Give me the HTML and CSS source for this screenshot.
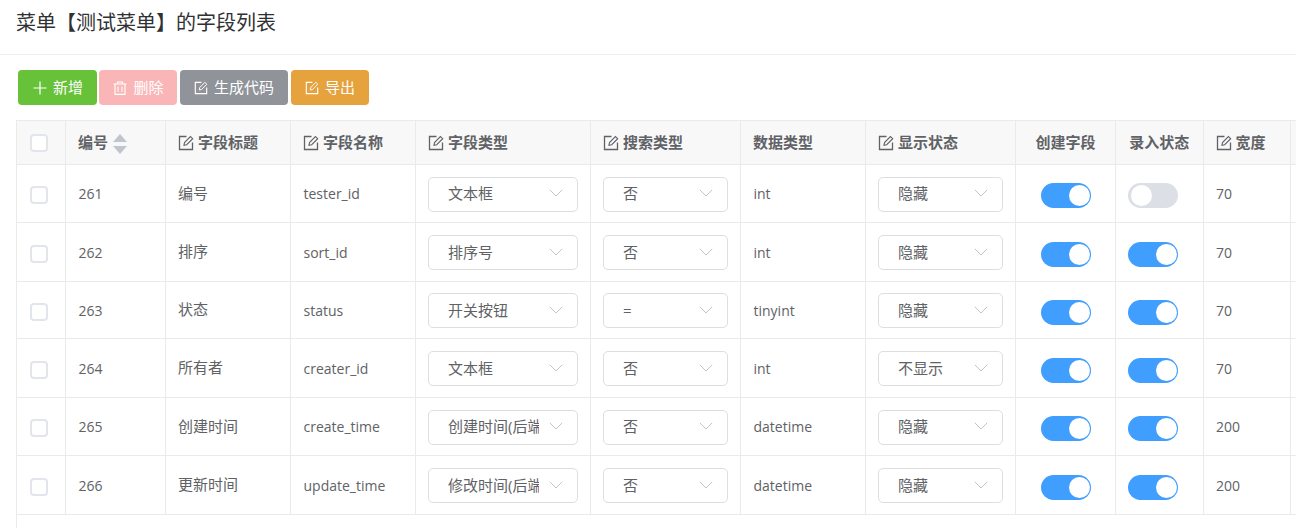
FILE: index.html
```html
<!DOCTYPE html>
<html lang="zh-CN">
<head>
<meta charset="utf-8">
<title>字段列表</title>
<link rel="stylesheet" href="styles.css">
</head>
<body>
<svg class="defs" aria-hidden="true">
  <symbol id="i-edit" viewBox="0 0 16 16">
    <path d="M8.5 1.5H1.5v13h13V7.5" fill="none" stroke="currentColor" stroke-width="1.3"/>
    <path d="M6 10.2l.5-2.7 5.9-6 2.3 2.2-6 6z" fill="none" stroke="currentColor" stroke-width="1.1"/>
  </symbol>
  <symbol id="i-plus" viewBox="0 0 14 14">
    <path d="M7 .5v13M.5 7h13" fill="none" stroke="currentColor" stroke-width="1.2"/>
  </symbol>
  <symbol id="i-trash" viewBox="0 0 14 14">
    <path d="M.5 3h13M4.5 3V1h5v2M2 3v10.4h10V3M5 5.5v5.5M9 5.5v5.5" fill="none" stroke="currentColor" stroke-width="1.1"/>
  </symbol>
  <symbol id="i-down" viewBox="0 0 14 8">
    <path d="M.8.8L7 7l6.2-6.2" fill="none" stroke="currentColor" stroke-width="1"/>
  </symbol>
  <symbol id="i-sort" viewBox="0 0 14 20">
    <path d="M7 0l7 8H0zM0 12h14l-7 8z" fill="currentColor"/>
  </symbol>
</svg>

<header class="page-head"><h1 class="page-title">菜单【测试菜单】的字段列表</h1></header>

<div class="toolbar">
  <button class="btn btn-add"><svg class="btn-icon"><use href="#i-plus"/></svg>新增</button>
  <button class="btn btn-del"><svg class="btn-icon"><use href="#i-trash"/></svg>删除</button>
  <button class="btn btn-gen"><svg class="btn-icon"><use href="#i-edit"/></svg>生成代码</button>
  <button class="btn btn-exp"><svg class="btn-icon"><use href="#i-edit"/></svg>导出</button>
</div>

<div class="table-wrap">
<table class="grid">
  <colgroup>
    <col class="c-check"><col class="c-id"><col class="c-m"><col class="c-m"><col class="c-l"><col class="c-s"><col class="c-m"><col class="c-s"><col class="c-id"><col class="c-w"><col class="c-w"><col class="c-w">
  </colgroup>
  <thead>
    <tr>
      <th class="th-check"><span class="check"></span></th>
      <th><span class="th-in">编号<svg class="sort"><use href="#i-sort"/></svg></span></th>
      <th><span class="th-in"><svg class="th-icon"><use href="#i-edit"/></svg>字段标题</span></th>
      <th><span class="th-in"><svg class="th-icon"><use href="#i-edit"/></svg>字段名称</span></th>
      <th><span class="th-in"><svg class="th-icon"><use href="#i-edit"/></svg>字段类型</span></th>
      <th><span class="th-in"><svg class="th-icon"><use href="#i-edit"/></svg>搜索类型</span></th>
      <th><span class="th-in">数据类型</span></th>
      <th><span class="th-in"><svg class="th-icon"><use href="#i-edit"/></svg>显示状态</span></th>
      <th class="center">创建字段</th>
      <th class="center">录入状态</th>
      <th><span class="th-in"><svg class="th-icon"><use href="#i-edit"/></svg>宽度</span></th>
      <th></th>
    </tr>
  </thead>
  <tbody>
    <tr class="r58">
      <td><span class="check check-body"></span></td><td class="en">261</td><td class="zh">编号</td><td class="en">tester_id</td>
      <td><div class="sel sel-l"><span class="sel-text">文本框</span><svg class="sel-arrow"><use href="#i-down"/></svg></div></td>
      <td><div class="sel sel-m"><span class="sel-text">否</span><svg class="sel-arrow"><use href="#i-down"/></svg></div></td>
      <td class="en">int</td>
      <td><div class="sel sel-m"><span class="sel-text">隐藏</span><svg class="sel-arrow"><use href="#i-down"/></svg></div></td>
      <td class="center"><span class="switch on"><i class="knob"></i></span></td>
      <td><span class="switch"><i class="knob"></i></span></td>
      <td class="en">70</td><td></td>
    </tr>
    <tr class="r59">
      <td><span class="check check-body"></span></td><td class="en">262</td><td class="zh">排序</td><td class="en">sort_id</td>
      <td><div class="sel sel-l"><span class="sel-text">排序号</span><svg class="sel-arrow"><use href="#i-down"/></svg></div></td>
      <td><div class="sel sel-m"><span class="sel-text">否</span><svg class="sel-arrow"><use href="#i-down"/></svg></div></td>
      <td class="en">int</td>
      <td><div class="sel sel-m"><span class="sel-text">隐藏</span><svg class="sel-arrow"><use href="#i-down"/></svg></div></td>
      <td class="center"><span class="switch on"><i class="knob"></i></span></td>
      <td><span class="switch on"><i class="knob"></i></span></td>
      <td class="en">70</td><td></td>
    </tr>
    <tr class="r57">
      <td><span class="check check-body"></span></td><td class="en">263</td><td class="zh">状态</td><td class="en">status</td>
      <td><div class="sel sel-l"><span class="sel-text">开关按钮</span><svg class="sel-arrow"><use href="#i-down"/></svg></div></td>
      <td><div class="sel sel-m"><span class="sel-text">=</span><svg class="sel-arrow"><use href="#i-down"/></svg></div></td>
      <td class="en">tinyint</td>
      <td><div class="sel sel-m"><span class="sel-text">隐藏</span><svg class="sel-arrow"><use href="#i-down"/></svg></div></td>
      <td class="center"><span class="switch on"><i class="knob"></i></span></td>
      <td><span class="switch on"><i class="knob"></i></span></td>
      <td class="en">70</td><td></td>
    </tr>
    <tr class="r59">
      <td><span class="check check-body"></span></td><td class="en">264</td><td class="zh">所有者</td><td class="en">creater_id</td>
      <td><div class="sel sel-l"><span class="sel-text">文本框</span><svg class="sel-arrow"><use href="#i-down"/></svg></div></td>
      <td><div class="sel sel-m"><span class="sel-text">否</span><svg class="sel-arrow"><use href="#i-down"/></svg></div></td>
      <td class="en">int</td>
      <td><div class="sel sel-m"><span class="sel-text">不显示</span><svg class="sel-arrow"><use href="#i-down"/></svg></div></td>
      <td class="center"><span class="switch on"><i class="knob"></i></span></td>
      <td><span class="switch on"><i class="knob"></i></span></td>
      <td class="en">70</td><td></td>
    </tr>
    <tr class="r58">
      <td><span class="check check-body"></span></td><td class="en">265</td><td class="zh">创建时间</td><td class="en">create_time</td>
      <td><div class="sel sel-l"><span class="sel-text">创建时间(后端自动)</span><svg class="sel-arrow"><use href="#i-down"/></svg></div></td>
      <td><div class="sel sel-m"><span class="sel-text">否</span><svg class="sel-arrow"><use href="#i-down"/></svg></div></td>
      <td class="en">datetime</td>
      <td><div class="sel sel-m"><span class="sel-text">隐藏</span><svg class="sel-arrow"><use href="#i-down"/></svg></div></td>
      <td class="center"><span class="switch on"><i class="knob"></i></span></td>
      <td><span class="switch on"><i class="knob"></i></span></td>
      <td class="en">200</td><td></td>
    </tr>
    <tr class="r59">
      <td><span class="check check-body"></span></td><td class="en">266</td><td class="zh">更新时间</td><td class="en">update_time</td>
      <td><div class="sel sel-l"><span class="sel-text">修改时间(后端自动)</span><svg class="sel-arrow"><use href="#i-down"/></svg></div></td>
      <td><div class="sel sel-m"><span class="sel-text">否</span><svg class="sel-arrow"><use href="#i-down"/></svg></div></td>
      <td class="en">datetime</td>
      <td><div class="sel sel-m"><span class="sel-text">隐藏</span><svg class="sel-arrow"><use href="#i-down"/></svg></div></td>
      <td class="center"><span class="switch on"><i class="knob"></i></span></td>
      <td><span class="switch on"><i class="knob"></i></span></td>
      <td class="en">200</td><td></td>
    </tr>
  </tbody>
</table>
</div>
</body>
</html>
```
FILE: styles.css
```css
* { box-sizing: border-box; }
html, body { margin: 0; height: 100%; overflow: hidden; }
body {
  display: flex;
  flex-direction: column;
  background: #fff;
  color: #606266;
  font: 15px/20px "Open Sans", "Noto Sans CJK SC", sans-serif;
}
.defs { display: none; }

.page-head { height: 55px; padding: 8px 16px 0; border-bottom: 1px solid #ebedf0; }
.page-title { margin: 0; font-size: 20px; line-height: 30px; font-weight: 400; color: #303133; }

.toolbar { display: flex; gap: 3px; padding: 15px 18px; height: 65px; }
.btn {
  display: flex; align-items: center; justify-content: center; gap: 6px;
  height: 35px; padding: 0 0 2px; border: 0; border-radius: 4px;
  color: #fff; font: inherit;
}
.btn-icon { width: 14px; height: 14px; flex: none; margin-top: 2px; }
.btn-add { width: 79px; margin-right: -1px; padding-left: 1px; background: #67c23a; }
.btn-del { width: 78px; padding-left: 1px; background: #fab6b6; }
.btn-gen { width: 108px; background: #909399; }
.btn-exp { width: 78px; background: #e6a23c; }

.table-wrap { flex: 1; margin-left: 16px; overflow: hidden; border-left: 1px solid #e8eaec; }
.grid { width: 1314px; table-layout: fixed; border-collapse: separate; border-spacing: 0; }
.c-check { width: 49px; }
.c-id { width: 100px; }
.c-m { width: 125px; }
.c-l { width: 175px; }
.c-s { width: 150px; }
.c-w { width: 87.5px; }

th, td {
  padding: 0 12px;
  border-right: 1px solid #e8eaec;
  border-bottom: 1px solid #e8eaec;
  text-align: left;
  white-space: nowrap;
  vertical-align: middle;
}
th:first-child, td:first-child { padding-left: 13px; }
th {
  height: 45px;
  padding-bottom: 2px;
  border-top: 1px solid #e8eaec;
  background: #f8f8f9;
  font-weight: 700;
}
th.th-check { padding-bottom: 0; padding-top: 1px; }
.r57 td { height: 57px; }
.r58 td { height: 58px; }
.r59 td { height: 59px; }
.center { text-align: center; }
td.en { padding-top: 1px; padding-left: 12.5px; font-size: 14px; }
td.zh { padding-bottom: 2px; }

.th-in { display: flex; align-items: center; }
.th-icon { width: 16px; height: 16px; margin: 3px 4px 0 0; flex: none; }
.sort { width: 14px; height: 20px; margin: 4px 0 0 5px; color: #c0c4cc; }

.check { display: block; width: 18px; height: 18px; border: 2px solid #e2e5ec; border-radius: 4px; background: #fff; }
.check-body { margin-top: 3px; }

.sel {
  display: flex; align-items: center; justify-content: space-between;
  height: 35px; margin-top: 1.5px; padding: 0 14px 0 19px;
  border: 1px solid #dcdee2; border-radius: 5px; background: #fff;
}
.sel-l { width: 150px; }
.sel-m { width: 125px; }
.sel-text { flex: 1; min-width: 0; margin: -2px 10px 0 0; overflow: hidden; }
.sel-arrow { width: 14px; height: 8px; flex: none; margin-top: -2px; color: #c0c4cc; }

.switch {
  display: inline-flex; align-items: center; width: 50px; height: 25px;
  margin-top: 4px; padding: 0 3px; border-radius: 13px; background: #dcdfe6; vertical-align: top;
}
.switch.on { justify-content: flex-end; padding: 0 1px; background: #409eff; }
.knob { display: block; width: 21px; height: 21px; border-radius: 50%; background: #fff; }
```
